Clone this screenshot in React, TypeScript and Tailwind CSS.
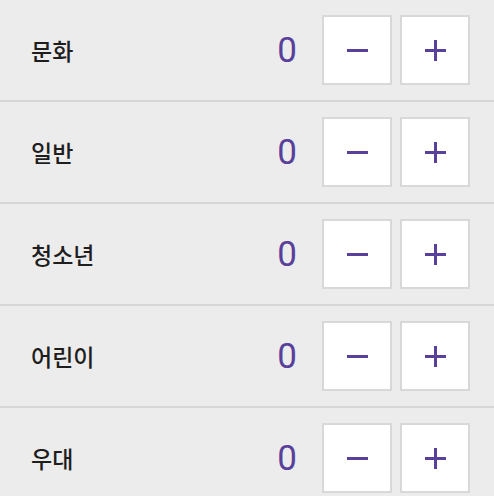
import React from "react";

const rows = ["문화", "일반", "청소년", "어린이", "우대"];

export default function App() {
  return (
    <div
      className="w-[494px] h-[496px] overflow-hidden bg-[#ececec] flex flex-col"
      style={{ fontFamily: '"Roboto", "Noto Sans CJK KR", sans-serif' }}
    >
      {rows.map((label) => (
        <div
          key={label}
          className="flex items-center shrink-0 h-[102px] pt-[15px] pb-[15px] border-b-2 border-[#d6d6d6] pl-[31px] pr-[24px]"
        >
          <div
            className="flex-1 text-[23px] font-medium text-[#1e1e1e] leading-none"
            style={{ fontFamily: '"Noto Sans CJK KR", sans-serif' }}
          >
            {label}
          </div>
          <div className="text-[35px] leading-none text-[#58409b] mr-[25px]">0</div>
          <button className="w-[70px] h-[70px] bg-white border-2 border-[#d8d8d8] flex items-center justify-center">
            <div className="w-[21px] h-[3px] bg-[#58409b]" />
          </button>
          <button className="ml-[8px] w-[70px] h-[70px] bg-white border-2 border-[#d8d8d8] flex items-center justify-center relative">
            <div className="w-[21px] h-[3px] bg-[#58409b]" />
            <div className="absolute w-[3px] h-[21px] bg-[#58409b]" />
          </button>
        </div>
      ))}
    </div>
  );
}
